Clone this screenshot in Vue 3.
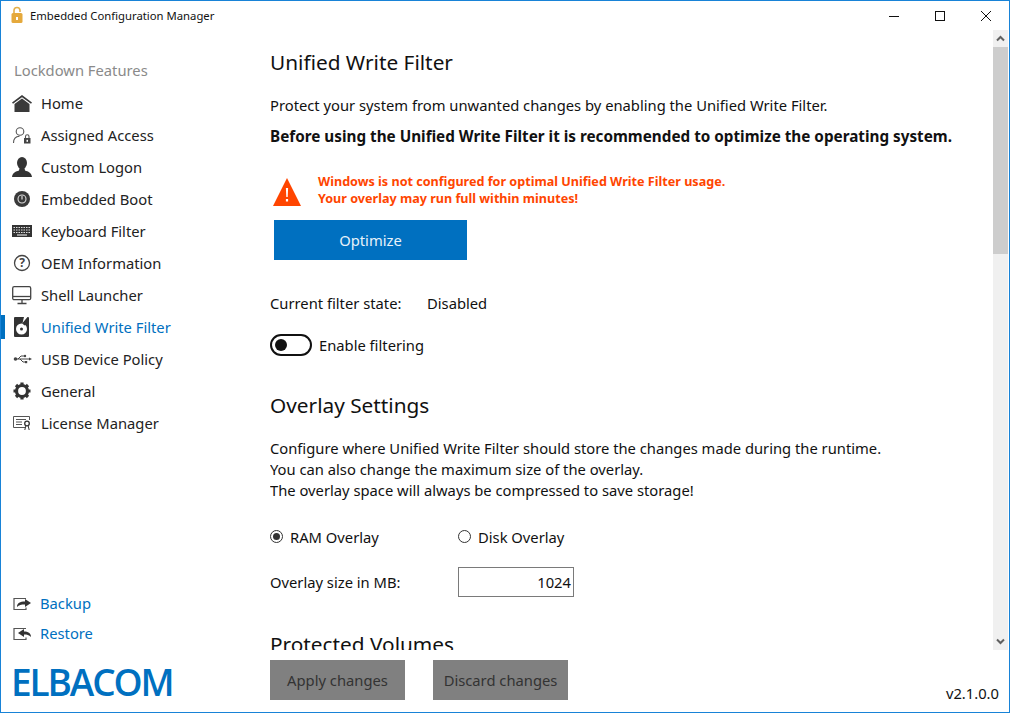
<script setup>
const items = [
  { k: 'home', t: 'Home' }, { k: 'assigned', t: 'Assigned Access' }, { k: 'logon', t: 'Custom Logon' },
  { k: 'boot', t: 'Embedded Boot' }, { k: 'kbd', t: 'Keyboard Filter' }, { k: 'oem', t: 'OEM Information' },
  { k: 'shell', t: 'Shell Launcher' }, { k: 'uwf', t: 'Unified Write Filter', active: true },
  { k: 'usb', t: 'USB Device Policy' }, { k: 'gear', t: 'General' }, { k: 'lic', t: 'License Manager' },
]
</script>

<template>
  <div class="window">
    <header class="titlebar">
      <svg class="lock" width="12" height="18" viewBox="0 0 12 18">
        <path d="M3 8V4.500a3 3 0 0 1 6 0V6" fill="none" stroke="#e3b04a" stroke-width="1.600" />
        <rect x="0.500" y="7" width="11" height="10" rx="1.500" fill="#e5a93c" />
        <rect x="5" y="11" width="2" height="3" fill="#fff" />
      </svg>
      <span class="title">Embedded Configuration Manager</span>
      <div class="winbtns">
        <svg width="12" height="12" viewBox="0 0 12 12"><path d="M1 6.500h10" stroke="#111" /></svg>
        <svg width="12" height="12" viewBox="0 0 12 12"><rect x="1.500" y="1.500" width="9" height="9" fill="none" stroke="#111" /></svg>
        <svg width="12" height="12" viewBox="0 0 12 12"><path d="M1 1l10 10M11 1L1 11" stroke="#111" /></svg>
      </div>
    </header>

    <div class="body">
      <aside class="sidebar">
        <div class="navhead">Lockdown Features</div>
        <nav class="nav">
          <div v-for="i in items" :key="i.k" class="navitem" :class="{ active: i.active }">
            <svg class="ico" width="22" height="22" viewBox="0 0 22 22">
              <g v-if="i.k === 'home'" fill="#3a3a3a">
                <path d="M1 10.500 11 3l10 7.500-1 1.300L11 5.200 2 11.800z" />
                <path d="M3.500 12 11 6.500 18.500 12v8h-15z" />
              </g>
              <g v-else-if="i.k === 'assigned'" fill="none" stroke="#555" stroke-width="1.100">
                <circle cx="9" cy="7.500" r="3.800" />
                <path d="M2.500 19c0-4 2.500-6.500 6-6.700" />
                <rect x="13" y="14" width="6.500" height="5.500" fill="#444" stroke="none" />
                <path d="M14.500 14v-1.500a1.700 1.700 0 0 1 3.500 0V14" />
                <rect x="15.500" y="15.800" width="1.500" height="2" fill="#fff" stroke="none" />
              </g>
              <g v-else-if="i.k === 'logon'" fill="#333">
                <ellipse cx="11" cy="7" rx="5" ry="6" />
                <path d="M8.500 12h5l.5 2.500c3 1 6.500 2 7 6.500H1c.5-4.500 4-5.500 7-6.500z" />
              </g>
              <g v-else-if="i.k === 'boot'">
                <circle cx="11" cy="11" r="8" fill="#3a3a3a" />
                <circle cx="11" cy="11" r="4" fill="none" stroke="#ddd" stroke-width="1.100" />
                <path d="M11 8v3.500" stroke="#ddd" stroke-width="1.200" />
              </g>
              <g v-else-if="i.k === 'kbd'">
                <rect x="1" y="5" width="20" height="12" fill="#333" />
                <path d="M2.500 7.500h17M2.500 10h17M2.500 12.500h17" stroke="#ddd" stroke-width="1" stroke-dasharray="1.500 1" />
                <path d="M6 15h10" stroke="#ddd" stroke-width="1.200" />
              </g>
              <g v-else-if="i.k === 'oem'">
                <circle cx="11" cy="11" r="7.500" fill="none" stroke="#444" stroke-width="1.300" />
                <text x="11" y="15" text-anchor="middle" class="q">?</text>
              </g>
              <g v-else-if="i.k === 'shell'" fill="none" stroke="#444" stroke-width="1.300">
                <rect x="1.700" y="2.700" width="18" height="13" rx="1.500" />
                <path d="M2 12.500h18" />
                <path d="M11 16v3M6.500 19.500h9" />
              </g>
              <g v-else-if="i.k === 'uwf'">
                <path d="M4 1h9l-1.500 6 5-6H17a1 1 0 0 1 1 1v18a1 1 0 0 1-1 1H4a1 1 0 0 1-1-1V2a1 1 0 0 1 1-1z" fill="#333" />
                <circle cx="10.500" cy="13" r="5.500" fill="#fff" />
                <circle cx="10.500" cy="13" r="1.500" fill="#333" />
                <path d="M13 9l3-5" stroke="#333" stroke-width="2" />
              </g>
              <g v-else-if="i.k === 'usb'" fill="#444" stroke="#444">
                <path d="M4 11h15" stroke-width="1" />
                <circle cx="4.500" cy="11" r="1.800" stroke="none" />
                <path d="M7 11l3-3h3M9 11l3 3h2" fill="none" stroke-width="1" />
                <circle cx="14" cy="8" r="1.200" stroke="none" />
                <rect x="14" y="13" width="2.200" height="2.200" stroke="none" />
                <path d="M18 9.500l3 1.500-3 1.500z" stroke="none" />
              </g>
              <g v-else-if="i.k === 'gear'">
                <circle cx="11" cy="11" r="5.500" fill="none" stroke="#333" stroke-width="3.200" />
                <path d="M11 2.500v17M2.500 11h17M5 5l12 12M17 5L5 17" stroke="#333" stroke-width="3.200" stroke-dasharray="3 11" />
              </g>
              <g v-else-if="i.k === 'lic'" fill="none" stroke="#555" stroke-width="1">
                <path d="M14 15.500H2.500v-11h16V8" />
                <path d="M5 7.500h10M5 10h6M5 12.500h6" />
                <circle cx="16" cy="11.500" r="2.300" stroke="#333" stroke-width="1.300" />
                <path d="M14.800 14l-1 4M17.200 14l1 4" stroke="#333" />
              </g>
            </svg>
            <span class="navtext">{{ i.t }}</span>
          </div>
        </nav>
        <div class="grow"></div>
        <div class="bottomlink">
          <svg class="ico" width="22" height="22" viewBox="0 0 22 22">
            <path d="M15 6.500H3v11h12v-2" fill="none" stroke="#555" stroke-width="1.200" />
            <path d="M6 15c0-4 3-5.500 8-5.500V7l6 4-6 4v-2.500c-4 0-6 .5-8 2.500z" fill="#333" />
          </svg>
          <span>Backup</span>
        </div>
        <div class="bottomlink">
          <svg class="ico" width="22" height="22" viewBox="0 0 22 22">
            <path d="M15 6.500H3v11h12v-2" fill="none" stroke="#555" stroke-width="1.200" />
            <path d="M20 15c0-4-3-5.500-7-5.500V7l-6 4 6 4v-2.500c3 0 5 .5 7 2.500z" fill="#333" />
          </svg>
          <span>Restore</span>
        </div>
        <div class="logo">ELBACOM</div>
      </aside>

      <main class="main">
        <div class="upper">
          <div class="scroll">
            <h2 class="h first">Unified Write Filter</h2>
            <p class="intro">Protect your system from unwanted changes by enabling the Unified Write Filter.</p>
            <p class="strong">Before using the Unified Write Filter it is recommended to optimize the operating system.</p>
            <div class="warn">
              <svg width="28" height="28" viewBox="0 0 28 28">
                <path d="M14 0 28 28H0z" fill="#ff4500" />
                <path d="M12.900 10h2.200l-.4 9h-1.400zM12.900 21h2.200v2.600h-2.200z" fill="#fff" />
              </svg>
              <div class="warntext">Windows is not configured for optimal Unified Write Filter usage.<br />Your overlay may run full within minutes!</div>
            </div>
            <button class="optimize">Optimize</button>
            <div class="state"><span class="statelabel">Current filter state:</span><span>Disabled</span></div>
            <div class="toggle-row">
              <span class="toggle"><i></i></span>
              <span>Enable filtering</span>
            </div>
            <h2 class="h second">Overlay Settings</h2>
            <p class="desc">Configure where Unified Write Filter should store the changes made during the runtime.<br />You can also change the maximum size of the overlay.<br />The overlay space will always be compressed to save storage!</p>
            <div class="radios">
              <span class="radio"><i class="dot on"></i>RAM Overlay</span>
              <span class="radio"><i class="dot"></i>Disk Overlay</span>
            </div>
            <div class="sizerow">
              <span class="sizelabel">Overlay size in MB:</span>
              <span class="sizeinput">1024</span>
            </div>
            <h2 class="h third">Protected Volumes</h2>
          </div>
          <div class="scrollbar">
            <div class="arrow"><svg width="9" height="7" viewBox="0 0 9 7"><path d="M1 5.500l3.500-3.500 3.500 3.500" fill="none" stroke="#606060" stroke-width="2" /></svg></div>
            <div class="track"><div class="thumb"></div></div>
            <div class="arrow"><svg width="9" height="7" viewBox="0 0 9 7"><path d="M1 1.500l3.500 3.500 3.500-3.500" fill="none" stroke="#606060" stroke-width="2" /></svg></div>
          </div>
        </div>
        <footer class="footer">
          <button class="graybtn">Apply changes</button>
          <button class="graybtn">Discard changes</button>
          <span class="version">v2.1.0.0</span>
        </footer>
      </main>
    </div>
  </div>
</template>

<style>
html, body { margin: 0; padding: 0; background: #fff; }
</style>

<style scoped>
.window {
  box-sizing: border-box; width: 1010px; height: 713px; border: 1px solid #1883d7; background: #fff;
  display: flex; flex-direction: column; overflow: hidden;
  font-family: "Noto Sans", "Open Sans", sans-serif; font-size: 14.75px; color: #111;
}
.titlebar { height: 29px; flex: none; display: flex; align-items: center; padding-left: 10px; }
.lock { margin-right: 7px; margin-top: -1px; }
.title { font-size: 11.3px; color: #111; }
.winbtns { margin-left: auto; display: flex; gap: 34px; padding-right: 17px; }
.body { flex: 1; display: flex; min-height: 0; }
.sidebar { width: 269px; flex: none; display: flex; flex-direction: column; }
.navhead { font-size: 14.75px; color: #8a8a8a; margin: 29px 0 0 13px; height: 28px; line-height: 22px; }
.nav { display: flex; flex-direction: column; }
.navitem { height: 32px; display: flex; align-items: center; padding-left: 10px; position: relative; color: #222; }
.navitem .ico { margin-right: 8px; flex: none; }
.navtext { margin-bottom: 1px; }
.navitem.active { color: #0070c0; }
.navitem.active::before { content: ""; position: absolute; left: 0; top: 4px; width: 4px; height: 24px; background: #0070c0; }
.grow { flex: 1; }
.bottomlink { height: 30px; display: flex; align-items: center; padding-left: 10px; color: #0070c0; }
.bottomlink .ico { margin-right: 7px; }
.logo { font-family: "Open Sans", sans-serif; font-weight: 600; font-size: 37px; line-height: 40px; letter-spacing: -2.1px; color: #0070c0; margin: 14px 0 10px 10px; }
.main { flex: 1; min-width: 0; display: flex; flex-direction: column; }
.upper { height: 620px; flex: none; display: flex; }
.scroll { flex: 1; min-width: 0; overflow: hidden; }
.h { font-weight: 400; font-size: 20.8px; line-height: 30px; margin: 0; color: #111; }
.first { margin-top: 17px; }
.intro { margin: 18px 0 0; line-height: 20px; }
.strong { margin: 11px 0 0; line-height: 20px; font-size: 15.27px; font-weight: 700; white-space: nowrap; }
.warn { display: flex; align-items: center; margin-top: 27px; height: 34px; }
.warn svg { margin-left: 3px; margin-right: 17px; margin-top: 4px; }
.warntext { color: #ff4500; font-size: 12.6px; font-weight: 700; line-height: 17px; }
.optimize { display: block; margin: 13px 0 0 4px; width: 193px; height: 40px; background: #0070c0; border: none; color: #e8f2fa; font: inherit; padding: 0; }
.state { display: flex; margin-top: 33px; line-height: 20px; }
.statelabel { width: 157px; }
.toggle-row { display: flex; align-items: center; margin-top: 20px; height: 24px; }
.toggle { box-sizing: border-box; width: 42px; height: 22px; border: 2px solid #111; border-radius: 11px; margin-right: 7px; display: flex; align-items: center; padding-left: 3px; }
.toggle i { width: 12px; height: 12px; border-radius: 50%; background: #111; display: block; }
.second { margin-top: 33px; }
.desc { margin: 18px 0 0; line-height: 21px; }
.radios { display: flex; margin-top: 25px; height: 22px; align-items: center; }
.radio { display: flex; align-items: center; width: 188px; }
.dot { box-sizing: border-box; width: 13px; height: 13px; border: 1px solid #333; border-radius: 50%; margin-right: 7px; display: flex; align-items: center; justify-content: center; margin-top: -1px; }
.dot.on::after { content: ""; width: 7px; height: 7px; border-radius: 50%; background: #333; }
.sizerow { display: flex; align-items: center; margin-top: 19px; height: 30px; }
.sizelabel { width: 188px; }
.sizeinput { box-sizing: border-box; width: 116px; height: 30px; border: 1px solid #7a7a7a; text-align: right; line-height: 28px; padding-right: 2px; }
.third { margin-top: 32px; }
.scrollbar { width: 15px; flex: none; margin-right: 1px; display: flex; flex-direction: column; }
.arrow { height: 17px; flex: none; background: #f0f0f0; display: flex; align-items: center; justify-content: center; }
.track { flex: 1; background: #f0f0f0; }
.thumb { height: 207px; background: #cdcdcd; }
.footer { flex: 1; display: flex; align-items: center; position: relative; padding-bottom: 2px; }
.graybtn { width: 135px; height: 40px; background: #808080; border: none; color: #333; font: inherit; padding: 0; margin-right: 28px; }
.version { margin-left: auto; margin-right: 10px; margin-top: 26px; font-size: 14.75px; }
.q { font-size: 12px; font-weight: 700; fill: #444; }
</style>
